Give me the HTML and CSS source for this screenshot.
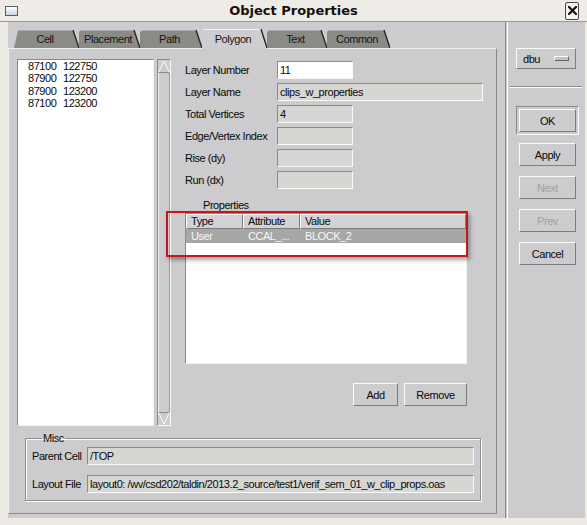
FILE: index.html
```html
<!DOCTYPE html>
<html>
<head>
<meta charset="utf-8">
<title>Object Properties</title>
<link rel="stylesheet" href="styles.css">
</head>
<body>
<div class="titlebar">
  <div class="win-icon"></div>
  <div class="title">Object Properties</div>
  <div class="close">
    <svg width="9" height="9" viewBox="0 0 9 9"><path d="M1 1 L8 8 M8 1 L1 8" stroke="#111" stroke-width="2.2" stroke-linecap="square"/></svg>
  </div>
</div>
<div class="frame">
  <div class="dialog">
    <div class="left">
      <div class="tabs">
        <div class="tab t-cell">
          <svg viewBox="0 0 65 18" preserveAspectRatio="none"><polygon points="0,18 4,0.5 59,0.5 65,18" fill="#8a8a86"/><line x1="59" y1="0" x2="65" y2="18" stroke="#1e1e1e" stroke-width="1.3"/></svg>
          <span>Cell</span>
        </div>
        <div class="tab t-place">
          <svg viewBox="0 0 61 18" preserveAspectRatio="none"><polygon points="0,18 0,2 2,0.5 55,0.5 61,18" fill="#8a8a86"/><line x1="55" y1="0" x2="61" y2="18" stroke="#1e1e1e" stroke-width="1.3"/></svg>
          <span>Placement</span>
        </div>
        <div class="tab t-path">
          <svg viewBox="0 0 62 18" preserveAspectRatio="none"><polygon points="0,18 0,2 2,0.5 56,0.5 62,18" fill="#8a8a86"/><line x1="56" y1="0" x2="62" y2="18" stroke="#1e1e1e" stroke-width="1.3"/></svg>
          <span>Path</span>
        </div>
        <div class="tab t-poly active">
          <svg viewBox="0 0 65 19" preserveAspectRatio="none"><polygon points="0,19 0,1.5 2,0 59,0 65.5,19" fill="#cecdd0"/><line x1="1" y1="0.5" x2="59" y2="0.5" stroke="#f4f4f4" stroke-width="1"/><line x1="59" y1="0" x2="65" y2="18" stroke="#1e1e1e" stroke-width="1.3"/></svg>
          <span>Polygon</span>
        </div>
        <div class="tab t-text">
          <svg viewBox="0 0 60 18" preserveAspectRatio="none"><polygon points="0,18 0,2 2,0.5 54,0.5 60,18" fill="#8a8a86"/><line x1="54" y1="0" x2="60" y2="18" stroke="#1e1e1e" stroke-width="1.3"/></svg>
          <span>Text</span>
        </div>
        <div class="tab t-common">
          <svg viewBox="0 0 63 18" preserveAspectRatio="none"><polygon points="0,18 0,2 2,0.5 57,0.5 63,18" fill="#8a8a86"/><line x1="57" y1="0" x2="63" y2="18" stroke="#1e1e1e" stroke-width="1.3"/></svg>
          <span>Common</span>
        </div>
      </div>

      <div class="panel">
        <div class="top-row">
          <div class="list">
            <div class="pt"><span>87100</span><span>122750</span></div>
            <div class="pt"><span>87900</span><span>122750</span></div>
            <div class="pt"><span>87900</span><span>123200</span></div>
            <div class="pt"><span>87100</span><span>123200</span></div>
          </div>
          <div class="scrollbar">
            <svg class="arrow" viewBox="0 0 12 13"><path d="M0.5 12.5 L6 1 L11.5 12.5" fill="none" stroke="#fafafa" stroke-width="1"/><path d="M0.5 12.5 L11.5 12.5" stroke="#8a8a8a" stroke-width="1"/></svg>
            <div class="trough"></div>
            <svg class="arrow" viewBox="0 0 12 13"><path d="M0.5 0.5 L11.5 0.5" stroke="#8a8a8a" stroke-width="1"/><path d="M0.5 0.5 L6 12 L11.5 0.5" fill="none" stroke="#fafafa" stroke-width="1"/></svg>
          </div>
          <div class="form">
            <div class="field"><label>Layer Number</label><div class="input white">11</div></div>
            <div class="field"><label>Layer Name</label><div class="input wide">clips_w_properties</div></div>
            <div class="field"><label>Total Vertices</label><div class="input">4</div></div>
            <div class="field"><label>Edge/Vertex Index</label><div class="input"></div></div>
            <div class="field"><label>Rise (dy)</label><div class="input"></div></div>
            <div class="field"><label>Run (dx)</label><div class="input"></div></div>

            <div class="props-label">Properties</div>
            <div class="props">
              <div class="table">
                <div class="thead">
                  <div class="th c1">Type</div>
                  <div class="th c2">Attribute</div>
                  <div class="th c3">Value</div>
                </div>
                <div class="trow sel">
                  <div class="td c1">User</div>
                  <div class="td c2">CCAL_...</div>
                  <div class="td c3">BLOCK_2</div>
                </div>
              </div>
              <div class="annot"></div>
            </div>
            <div class="btn-row">
              <div class="btn btn-add">Add</div>
              <div class="btn btn-remove">Remove</div>
            </div>
          </div>
        </div>

        <fieldset class="misc">
          <legend>Misc</legend>
          <div class="mrow"><label>Parent Cell</label><div class="input path">/TOP</div></div>
          <div class="mrow"><label>Layout File</label><div class="input path">layout0: /wv/csd202/taldin/2013.2_source/test1/verif_sem_01_w_clip_props.oas</div></div>
        </fieldset>
      </div>
    </div>

    <div class="vsep"></div>

    <div class="right">
      <div class="dbu"><span>dbu</span><div class="dbu-ind"></div></div>
      <div class="hsep"></div>
      <div class="ok-frame"><div class="btn rbtn">OK</div></div>
      <div class="btn rbtn stack first">Apply</div>
      <div class="btn rbtn stack disabled">Next</div>
      <div class="btn rbtn stack disabled">Prev</div>
      <div class="btn rbtn stack">Cancel</div>
    </div>
  </div>
</div>
</body>
</html>
```

FILE: styles.css
```css
* { box-sizing: border-box; }
html, body { margin: 0; padding: 0; }
body {
  width: 587px;
  height: 525px;
  overflow: hidden;
  background: #eeeae6;
  font-family: "Liberation Sans", Arial, sans-serif;
  font-size: 11px;
  letter-spacing: -0.45px;
  color: #0a0a0a;
}

/* title bar */
.titlebar {
  height: 22px;
  display: grid;
  grid-template-columns: 1fr auto 1fr;
  align-items: center;
  background: #efebe7;
  border-bottom: 1px solid #9c9995;
}
.win-icon {
  width: 13px;
  height: 10px;
  margin-left: 5px;
  border: 1px solid #5c5c5c;
  background: linear-gradient(#ffffff, #c9d3e2);
}
.title {
  font-family: "DejaVu Sans", sans-serif;
  font-weight: bold;
  font-size: 13px;
  letter-spacing: 0;
  line-height: 21px;
  color: #111;
}
.close {
  justify-self: end;
  margin-right: 8px;
  width: 14px;
  height: 18px;
  border: 1px solid #474747;
  border-radius: 2px;
  background: #f6f4f1;
  display: flex;
  align-items: center;
  justify-content: center;
}
.close svg { display: block; }

/* frame */
.frame { padding: 0 2px 0 8px; }
.dialog {
  height: 496px;
  background: #cccbcd;
  display: flex;
}
.left { width: 497px; padding: 8px 8px 0 0; }

/* tabs */
.tabs {
  display: flex;
  align-items: flex-start;
  height: 18px;
  margin-left: 6px;
}
.tab {
  display: grid;
  height: 18px;
}
.tab > * { grid-area: 1 / 1; }
.tab svg { display: block; width: 100%; height: 100%; }
.tab span {
  align-self: center;
  justify-self: center;
  line-height: 12px;
  color: #161616;
  padding-right: 3px;
}
.tab.active { height: 20px; margin-top: -1px; position: relative; z-index: 1; }
.tab.active span { margin-top: -1px; }
.t-cell { width: 65px; }
.t-place { width: 61px; }
.t-path { width: 62px; }
.t-poly { width: 65px; }
.t-text { width: 60px; }
.t-common { width: 63px; }

/* panel */
.panel {
  height: 466px;
  border: 1px solid;
  border-color: #f0f0f0 #8a8a8a #8a8a8a #f0f0f0;
  padding: 10px 0 0 8px;
}
.top-row { display: flex; align-items: flex-start; }
.list {
  width: 137px;
  height: 367px;
  background: #fff;
  border: 1px solid;
  border-color: #8a8a8a #f2f2f2 #f2f2f2 #8a8a8a;
  padding-left: 10px;
  line-height: 12.4px;
}
.pt { display: flex; }
.pt span:first-child { width: 35px; }

.scrollbar {
  width: 14px;
  height: 367px;
  margin-left: 3px;
  border: 1px solid;
  border-color: #8a8a8a #fafafa #fafafa #8a8a8a;
  display: flex;
  flex-direction: column;
}
.arrow { display: block; width: 12px; height: 13px; }
.trough {
  flex: 1;
  border-left: 1px solid #f4f4f4;
  border-right: 1px solid #9a9a9a;
}

.form { margin-left: 14px; width: 298px; padding-top: 2px; }
.field {
  display: flex;
  align-items: center;
  height: 18px;
  margin-bottom: 4px;
}
.field label { width: 92px; }
.input {
  width: 76px;
  height: 18px;
  background: #d6d6d3;
  border: 1px solid;
  border-color: #8a8a8a #fafafa #fafafa #8a8a8a;
  padding-left: 2px;
  line-height: 16px;
  white-space: nowrap;
  overflow: hidden;
}
.input.white { background: #fff; }
.input.wide { width: 206px; }

.props-label {
  margin-top: 10px;
  padding-left: 18px;
  line-height: 12px;
}
.props {
  position: relative;
  margin-top: 2px;
  width: 282px;
}
.table {
  height: 151px;
  background: #fff;
  border: 1px solid;
  border-color: #8a8a8a #f2f2f2 #f2f2f2 #8a8a8a;
}
.thead, .trow { display: flex; }
.th {
  height: 15px;
  background: #d3d2d4;
  border: 1px solid;
  border-color: #fbfbfb #7c7c7c #7c7c7c #fbfbfb;
  padding-left: 4px;
  line-height: 13px;
}
.c1 { width: 57px; }
.c2 { width: 57px; }
.c3 { flex: 1; }
.trow.sel {
  height: 14px;
  line-height: 14px;
  background: #a7a7a5;
  color: #f7f7f7;
}
.td { padding-left: 5px; white-space: nowrap; }
.annot {
  position: absolute;
  left: -19px;
  top: -2px;
  width: 302px;
  height: 46px;
  border: 2px solid #c8161d;
  box-shadow: 2px 3px 4px rgba(0, 0, 0, 0.35);
}

.btn-row {
  display: flex;
  justify-content: flex-end;
  gap: 6px;
  width: 282px;
  margin-top: 19px;
}
.btn {
  height: 23px;
  border: 1px solid;
  border-color: #fbfbfb #7c7c7c #7c7c7c #fbfbfb;
  display: flex;
  align-items: center;
  justify-content: center;
}
.btn-add { width: 45px; }
.btn-remove { width: 63px; }

/* misc group */
.misc {
  margin: 6px 0 0 8px;
  width: 456px;
  min-inline-size: 0;
  padding: 0 6px 7px 6px;
  border: 1px solid #8e8e8e;
  box-shadow: 1px 1px 0 #fafafa, inset 1px 1px 0 #fafafa;
}
.misc legend {
  margin-left: 10px;
  padding: 0 1px;
  line-height: 12px;
}
.mrow {
  display: flex;
  align-items: center;
  height: 18px;
  margin-top: 3px;
}
.mrow + .mrow { margin-top: 10px; }
.mrow label { width: 55px; }
.input.path { width: 387px; }

/* right column */
.vsep {
  width: 3px;
  background: linear-gradient(to right, #8a8a8a 0 1px, #cccbcd 1px 2px, #ffffff 2px 3px);
}
.right { width: 77px; padding-top: 26px; }
.dbu {
  margin-left: 8px;
  width: 60px;
  height: 21px;
  border: 1px solid;
  border-color: #fbfbfb #7c7c7c #7c7c7c #fbfbfb;
  display: flex;
  align-items: center;
  justify-content: space-between;
  padding: 0 6px;
}
.dbu-ind {
  width: 15px;
  height: 5px;
  border: 1px solid;
  border-color: #fbfbfb #666 #666 #fbfbfb;
  background: #c2c1c3;
}
.hsep {
  margin: 17px 0 0 2px;
  width: 72px;
  height: 2px;
  border-top: 1px solid #8a8a8a;
  border-bottom: 1px solid #fff;
}
.ok-frame {
  margin: 18px 0 0 8px;
  width: 63px;
  height: 29px;
  border: 1px solid;
  border-color: #8a8a8a #fbfbfb #fbfbfb #8a8a8a;
  padding: 2px;
}
.rbtn { width: 57px; }
.stack { margin: 10px 0 0 11px; }
.stack.first { margin-top: 8px; }
.disabled { color: #a2a2a2; }
```
